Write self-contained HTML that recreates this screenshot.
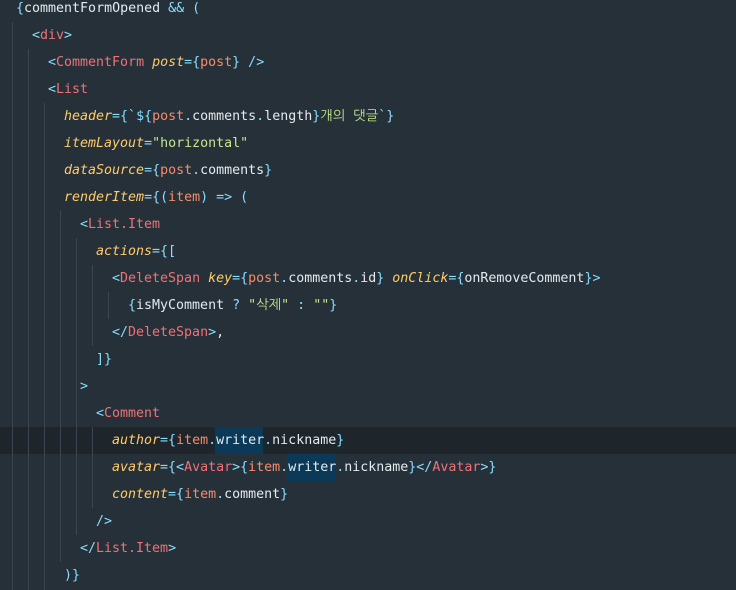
<!DOCTYPE html>
<html><head><meta charset="utf-8"><style>
html,body{margin:0;padding:0;width:736px;height:590px;overflow:hidden;background:#263038;}
.l{position:absolute;left:0;height:27px;line-height:27px;white-space:pre;font-family:"DejaVu Sans Mono","NanumGothic","Noto Sans CJK KR",monospace;font-size:13.3px;color:#e4eaee;}
.g{position:absolute;width:1px;background:#3b4650;}
.cur{position:absolute;left:0;width:736px;height:27px;background:#1e252b;}
.hl{position:absolute;height:27px;background:#0b3a58;}
.p{color:#89ddff}.t{color:#f07178}.a{color:#ffcb6b;font-style:italic}.v{color:#f78c6c}.s{color:#c3e88d}
</style></head><body>
<div class="cur" style="top:426.5px"></div>
<div class="hl" style="left:215px;width:48px;top:426.5px"></div>
<div class="hl" style="left:287px;width:48px;top:453.5px"></div>
<div class="g" style="left:12px;top:21.5px;height:568.5px"></div>
<div class="g" style="left:28px;top:48.5px;height:541.5px"></div>
<div class="g" style="left:44px;top:102.5px;height:487.5px"></div>
<div class="g" style="left:60px;top:210.5px;height:351px"></div>
<div class="g" style="left:76px;top:237.5px;height:297px"></div>
<div class="g" style="left:92px;top:264.5px;height:81px"></div>
<div class="g" style="left:108px;top:291.5px;height:27px"></div>
<div class="g" style="left:92px;top:426.5px;height:81px"></div>

<div class="l" style="top:-5px;left:16px"><span class="p">{</span>commentFormOpened <span class="p">&amp;&amp; (</span></div>
<div class="l" style="top:22px;left:32px"><span class="p">&lt;</span><span class="t">div</span><span class="p">&gt;</span></div>
<div class="l" style="top:49px;left:48px"><span class="p">&lt;</span><span class="t">CommentForm</span> <span class="a">post</span><span class="p">={</span><span class="v">post</span><span class="p">} /&gt;</span></div>
<div class="l" style="top:76px;left:48px"><span class="p">&lt;</span><span class="t">List</span></div>
<div class="l" style="top:103px;left:64px"><span class="a">header</span><span class="p">={`${</span><span class="v">post</span><span class="p">.</span>comments<span class="p">.</span>length<span class="p">}</span><span class="s">개의 댓글</span><span class="p">`}</span></div>
<div class="l" style="top:130px;left:64px"><span class="a">itemLayout</span><span class="p">=</span><span class="s">"horizontal"</span></div>
<div class="l" style="top:157px;left:64px"><span class="a">dataSource</span><span class="p">={</span><span class="v">post</span><span class="p">.</span>comments<span class="p">}</span></div>
<div class="l" style="top:184px;left:64px"><span class="a">renderItem</span><span class="p">={(</span><span class="v">item</span><span class="p">) =&gt; (</span></div>
<div class="l" style="top:211px;left:80px"><span class="p">&lt;</span><span class="t">List.Item</span></div>
<div class="l" style="top:238px;left:96px"><span class="a">actions</span><span class="p">={[</span></div>
<div class="l" style="top:265px;left:112px"><span class="p">&lt;</span><span class="t">DeleteSpan</span> <span class="a">key</span><span class="p">={</span><span class="v">post</span><span class="p">.</span>comments<span class="p">.</span>id<span class="p">}</span> <span class="a">onClick</span><span class="p">={</span>onRemoveComment<span class="p">}&gt;</span></div>
<div class="l" style="top:292px;left:128px"><span class="p">{</span>isMyComment <span class="p">?</span> <span class="s">"삭제"</span> <span class="p">:</span> <span class="s">""</span><span class="p">}</span></div>
<div class="l" style="top:319px;left:112px"><span class="p">&lt;/</span><span class="t">DeleteSpan</span><span class="p">&gt;</span>,</div>
<div class="l" style="top:346px;left:96px"><span class="p">]}</span></div>
<div class="l" style="top:373px;left:80px"><span class="p">&gt;</span></div>
<div class="l" style="top:400px;left:96px"><span class="p">&lt;</span><span class="t">Comment</span></div>
<div class="l" style="top:427px;left:112px"><span class="a">author</span><span class="p">={</span><span class="v">item</span><span class="p">.</span>writer<span class="p">.</span>nickname<span class="p">}</span></div>
<div class="l" style="top:454px;left:112px"><span class="a">avatar</span><span class="p">={&lt;</span><span class="t">Avatar</span><span class="p">&gt;{</span><span class="v">item</span><span class="p">.</span>writer<span class="p">.</span>nickname<span class="p">}&lt;/</span><span class="t">Avatar</span><span class="p">&gt;}</span></div>
<div class="l" style="top:481px;left:112px"><span class="a">content</span><span class="p">={</span><span class="v">item</span><span class="p">.</span>comment<span class="p">}</span></div>
<div class="l" style="top:508px;left:96px"><span class="p">/&gt;</span></div>
<div class="l" style="top:535px;left:80px"><span class="p">&lt;/</span><span class="t">List.Item</span><span class="p">&gt;</span></div>
<div class="l" style="top:562px;left:64px"><span class="p">)}</span></div>
</body></html>
